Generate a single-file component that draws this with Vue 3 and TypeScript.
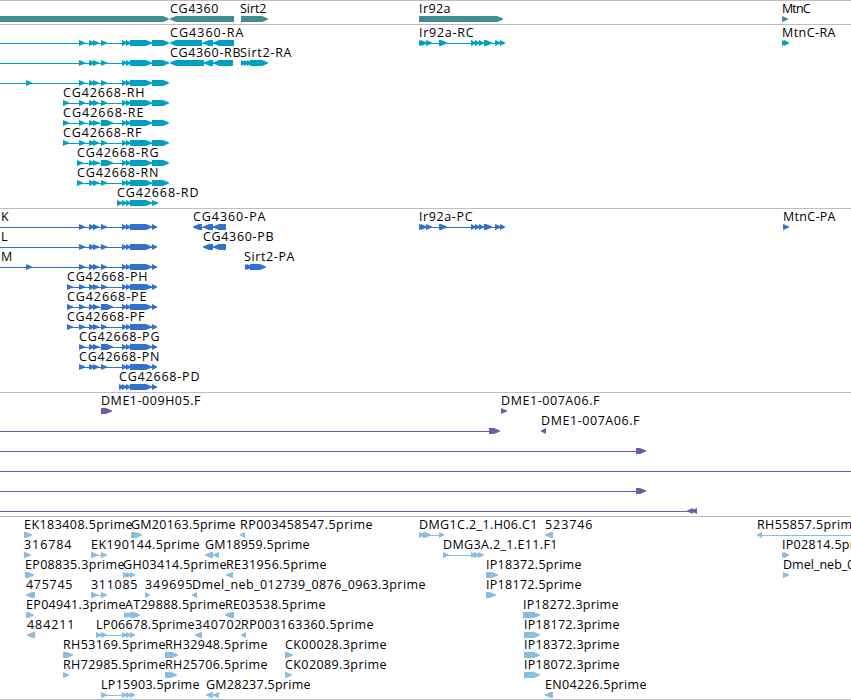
<template>
  <div class="browser">
    <section
      v-for="track in tracks"
      :key="track.name"
      class="track"
      :class="track.name"
    >
      <svg
        v-for="(row, i) in track.rows"
        :key="i"
        class="row"
        width="851"
        height="20"
      >
        <g v-for="(f, j) in row" :key="j">
          <rect
            v-if="f.line"
            :x="f.line[0]"
            y="16"
            :width="f.line[1] - f.line[0]"
            height="1"
          />
          <polygon
            v-for="(b, k) in f.blocks"
            :key="k"
            :points="arrow(b[0], b[1], f.reverse)"
          />
          <text
            v-if="f.label"
            class="label"
            :x="f.from"
            y="10"
            :textLength="f.to! - f.from! + 0.5"
            lengthAdjust="spacing"
          >{{ f.label }}</text>
        </g>
      </svg>
    </section>
  </div>
</template>

<script setup lang="ts">
type Span = [number, number]

interface Feature {
  label?: string
  from?: number
  to?: number
  blocks: Span[]
  line?: Span
  reverse?: boolean
}

interface Track {
  name: string
  rows: Feature[][]
}

// label with its left and right edge, exon blocks, connecting line
function fwd(label: string, from: number, to: number, blocks: Span[], line?: Span): Feature {
  return { label, from, to, blocks, line }
}

function rev(label: string, from: number, to: number, blocks: Span[], line?: Span): Feature {
  return { label, from, to, blocks, line, reverse: true }
}

function arrow(x1: number, x2: number, reverse?: boolean) {
  const tip = Math.min(6, x2 - x1)
  if (reverse) {
    return `${x2},13 ${x1 + tip},13 ${x1},15.5 ${x1},16.5 ${x1 + tip},19 ${x2},19`
  }
  return `${x1},13 ${x2 - tip},13 ${x2},15.5 ${x2},16.5 ${x2 - tip},19 ${x1},19`
}

const pair: Span[] = [[89, 95], [93, 99]]
const short: Span = [101, 107]
const long: Span = [101, 113]
const middle: Span[] = [[122, 127], [126, 131], [130, 152]]
const endR: Span = [152, 169]
const endP: Span = [152, 157]
const ir92a: Span[] = [
  [419, 425], [421, 427], [426, 432], [439, 447], [471, 476], [475, 480],
  [479, 484], [484, 492], [495, 501], [500, 505],
]

function gene(start: Span[], exon: Span, end: Span): Span[] {
  return [...start, ...pair, exon, ...middle, end]
}

const tracks: Track[] = [
  {
    name: 'genes',
    rows: [
      [
        { blocks: [[0, 169]] },
        rev('CG4360', 170, 218, [[170, 234]]),
        fwd('Sirt2', 240, 266, [[241, 268]]),
        fwd('Ir92a', 419, 450, [[419, 503]]),
        fwd('MtnC', 782, 810, [[782, 788]]),
      ],
    ],
  },
  {
    name: 'transcripts',
    rows: [
      [
        { blocks: gene([[79, 85]], short, endR), line: [0, 165] },
        rev('CG4360-RA', 170, 243, [[170, 202], [203, 213], [213, 234]], [175, 230]),
        fwd('Ir92a-RC', 419, 473, ir92a, [420, 503]),
        fwd('MtnC-RA', 782, 835, [[782, 787], [784, 789]]),
      ],
      [
        { blocks: gene([[79, 85]], short, endR), line: [0, 165] },
        rev('CG4360-RB', 170, 240, [[170, 204], [204, 213], [213, 233]], [175, 230]),
        fwd('Sirt2-RA', 240, 291, [[241, 246], [244, 249], [247, 252], [250, 268]]),
      ],
      [{ blocks: gene([[26, 32], [79, 85]], short, endR), line: [0, 165] }],
      [fwd('CG42668-RH', 63, 144, gene([[63, 69], [79, 85]], short, endR), [63, 165])],
      [fwd('CG42668-RE', 63, 143, gene([[63, 69], [79, 85]], long, endR), [63, 165])],
      [fwd('CG42668-RF', 63, 141, gene([[63, 69], [79, 85]], short, endR), [63, 165])],
      [fwd('CG42668-RG', 77, 158, gene([[77, 83]], long, endR), [77, 165])],
      [fwd('CG42668-RN', 77, 158, gene([[77, 83]], short, endR), [77, 165])],
      [fwd('CG42668-RD', 117, 198, [[117, 123], ...middle, [152, 158]], [117, 155])],
    ],
  },
  {
    name: 'cds',
    rows: [
      [
        fwd('K', 1, 9, gene([[79, 85]], short, endP), [0, 155]),
        rev('CG4360-PA', 193, 265, [[193, 202], [203, 213], [213, 226]], [195, 225]),
        fwd('Ir92a-PC', 419, 472, ir92a, [420, 503]),
        fwd('MtnC-PA', 783, 835, [[783, 789]]),
      ],
      [
        fwd('L', 1, 7, gene([[79, 85]], short, endP), [0, 155]),
        rev('CG4360-PB', 203, 273, [[203, 213], [213, 226]], [205, 225]),
      ],
      [
        fwd('M', 1, 10, gene([[26, 32], [79, 85]], short, endP), [0, 155]),
        fwd('Sirt2-PA', 244, 294, [[245, 250], [247, 252], [250, 266]]),
      ],
      [fwd('CG42668-PH', 67, 147, gene([[67, 73], [79, 85]], short, endP), [67, 155])],
      [fwd('CG42668-PE', 67, 146, gene([[67, 73], [79, 85]], long, endP), [67, 155])],
      [fwd('CG42668-PF', 67, 144, gene([[67, 73], [79, 85]], short, endP), [67, 155])],
      [fwd('CG42668-PG', 79, 159, gene([[79, 85]], long, endP), [79, 155])],
      [fwd('CG42668-PN', 79, 159, gene([[79, 85]], short, endP), [79, 155])],
      [fwd('CG42668-PD', 119, 199, [[119, 124], ...middle, endP], [119, 155])],
    ],
  },
  {
    name: 'clones',
    rows: [
      [
        fwd('DME1-009H05.F', 101, 200, [[101, 112]]),
        fwd('DME1-007A06.F', 501, 599, [[501, 507]]),
      ],
      [
        { blocks: [[489, 500]], line: [0, 490] },
        rev('DME1-007A06.F', 541, 639, [[541, 546]]),
      ],
      [{ blocks: [[636, 646]], line: [0, 637] }],
      [{ blocks: [], line: [0, 851] }],
      [{ blocks: [[636, 646]], line: [0, 637] }],
      [{ blocks: [[687, 693], [691, 697]], line: [0, 690], reverse: true }],
    ],
  },
  {
    name: 'ests',
    rows: [
      [
        fwd('EK183408.5prime', 24, 132, [[24, 32]]),
        fwd('GM20163.5prime', 131, 235, [[131, 142]]),
        rev('RP003458547.5prime', 240, 372, [[240, 245]]),
        fwd('DMG1C.2_1.H06.C1', 419, 537, [[419, 425], [423, 431], [439, 444]], [420, 440]),
        rev('523746', 545, 592, [[545, 553]]),
        rev('RH55857.5prime', 757, 859, [[757, 762]], [760, 851]),
      ],
      [
        fwd('316784', 24, 71, [[24, 31]]),
        fwd('EK190144.5prime', 91, 199, [[91, 98], [101, 107]], [92, 103]),
        rev('GM18959.5prime', 205, 309, [[205, 213], [213, 219]]),
        fwd('DMG3A.2_1.E11.F1', 443, 557, [[443, 449], [471, 476], [474, 480], [478, 484]], [444, 474]),
        fwd('IP02814.5prime', 782, 877, [[782, 787], [784, 789]]),
      ],
      [
        fwd('EP08835.3prime', 25, 124, [[25, 34]]),
        fwd('GH03414.5prime', 123, 226, [[123, 128], [126, 131], [130, 135]]),
        rev('RE31956.5prime', 226, 326, [[226, 233]]),
        fwd('IP18372.5prime', 486, 581, [[486, 498]]),
        fwd('Dmel_neb_0', 783, 854, [[783, 789]]),
      ],
      [
        rev('475745', 26, 72, [[26, 35]]),
        fwd('311085', 91, 137, [[91, 98], [101, 107]], [92, 103]),
        fwd('349695', 145, 192, [[145, 150]]),
        rev('Dmel_neb_012739_0876_0963.3prime', 192, 425, [[192, 197]]),
        fwd('IP18172.5prime', 486, 581, [[486, 496]]),
      ],
      [
        fwd('EP04941.3prime', 26, 125, [[26, 34]]),
        fwd('AT29888.5prime', 125, 225, [[124, 130], [127, 132], [130, 140]]),
        rev('RE03538.5prime', 225, 325, [[225, 234]]),
        fwd('IP18272.3prime', 523, 618, [[523, 540]]),
      ],
      [
        rev('484211', 27, 74, [[27, 35]]),
        fwd('LP06678.5prime', 96, 194, [[96, 102], [101, 107], [122, 127], [126, 131], [130, 135]], [97, 125]),
        rev('340702', 195, 241, [[195, 202]]),
        rev('RP003163360.5prime', 241, 373, [[241, 246]]),
        fwd('IP18172.3prime', 524, 619, [[524, 540]]),
      ],
      [
        fwd('RH53169.5prime', 63, 165, [[63, 73]]),
        fwd('RH32948.5prime', 165, 267, [[165, 178]]),
        fwd('CK00028.3prime', 285, 386, [[285, 293]]),
        fwd('IP18372.3prime', 524, 619, [[524, 540]]),
      ],
      [
        fwd('RH72985.5prime', 63, 165, [[63, 69]]),
        fwd('RH25706.5prime', 165, 267, [[165, 177]]),
        fwd('CK02089.3prime', 285, 386, [[285, 292]]),
        fwd('IP18072.3prime', 524, 619, [[524, 540]]),
      ],
      [
        fwd('LP15903.5prime', 101, 199, [[101, 107], [122, 127], [126, 131], [130, 135]], [102, 125]),
        rev('GM28237.5prime', 206, 310, [[206, 213], [213, 219]]),
        rev('EN04226.5prime', 545, 646, [[545, 553]]),
      ],
    ],
  },
]
</script>

<style>
body {
  margin: 0;
  background: #fff;
}
</style>

<style scoped>
.browser {
  width: 851px;
  height: 699px;
  overflow: hidden;
  background: #fff;
  border-bottom: 1px solid #bebebe;
}

.track {
  display: flex;
  flex-direction: column;
  border-top: 1px solid #bebebe;
  padding: 2px 0 1px;
}

.row {
  display: block;
  flex: none;
  overflow: visible;
}

.label {
  fill: #000;
  font-family: 'Open Sans', 'Noto Sans', sans-serif;
  font-size: 12.5px;
}

.genes {
  fill: #408c92;
}

.transcripts {
  fill: #00a0c0;
}

.cds {
  fill: #3070d0;
}

.clones {
  fill: #7858a8;
}

.ests {
  fill: #88bede;
}
</style>
